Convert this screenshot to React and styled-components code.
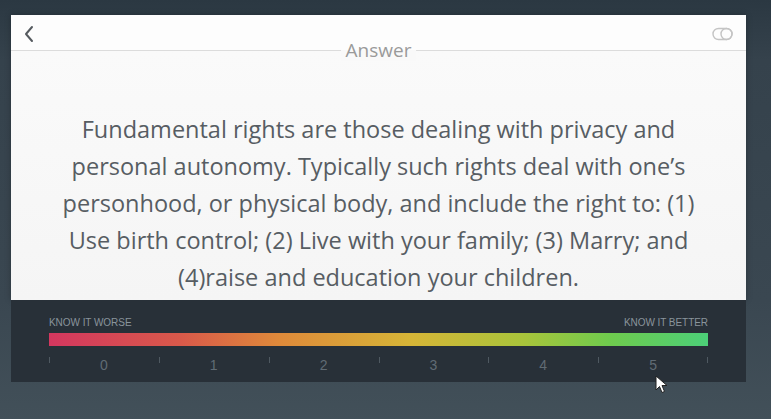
import React from "react";
import styled, { createGlobalStyle } from "styled-components";

const Global = createGlobalStyle`
  html, body { margin: 0; padding: 0; }
  body {
    width: 771px;
    height: 419px;
    overflow: hidden;
    background: linear-gradient(180deg, #2b3842 0px, #35424c 60px, #3a4751 300px, #425059 419px);
    font-family: "Open Sans", "Noto Sans", sans-serif;
  }
`;

const Page = styled.div`
  position: relative;
  padding: 15px 0 0 11px;
  width: 735px;
`;

const Card = styled.div`
  background: #f7f7f7;
  height: 285px;
  display: flex;
  flex-direction: column;
  box-shadow: 0 0 6px rgba(0,0,0,0.25);
`;

const Header = styled.div`
  height: 35px;
  background: #fdfdfd;
  border-bottom: 1px solid #dcdcdc;
  position: relative;
  display: flex;
  align-items: center;
  justify-content: space-between;
  padding: 0 12px 0 12px;
`;

const IconButton = styled.div`
  display: flex;
  align-items: center;
  height: 100%;
  padding-top: 2px;
`;

const Title = styled.div`
  position: absolute;
  left: 50%;
  bottom: -11px;
  transform: translateX(-50%);
  background: linear-gradient(180deg, #fdfdfd 50%, #f9f9f9 50%);
  padding: 0 5px;
  font-size: 19px;
  color: #9a9a9a;
  line-height: 22px;
`;

const Body = styled.div`
  flex: 1;
  display: flex;
  justify-content: center;
  padding-top: 60px;
  background: linear-gradient(180deg, #fafafa 0%, #f5f5f5 100%);
  overflow: hidden;
`;

const AnswerText = styled.p`
  margin: 0;
  width: 640px;
  text-align: center;
  font-size: 23.5px;
  line-height: 37px;
  color: #575d63;
`;

const Panel = styled.div`
  background: #283038;
  height: 82px;
  padding: 17px 38px 0 38px;
  box-sizing: border-box;
  display: flex;
  flex-direction: column;
`;

const Labels = styled.div`
  display: flex;
  justify-content: space-between;
  font-family: "Liberation Sans", Arial, sans-serif;
  font-size: 10px;
  letter-spacing: -0.05px;
  color: #8a949c;
  text-transform: uppercase;
  height: 11px;
  line-height: 11px;
`;

const Bar = styled.div`
  margin-top: 5px;
  height: 13px;
  background: linear-gradient(90deg, #d4375f 0%, #d9594a 20%, #df8a3a 35%, #d6b537 55%, #a9c43b 72%, #6fcb4d 85%, #4ccf78 100%);
`;

const Scale = styled.div`
  display: grid;
  grid-template-columns: repeat(6, 1fr);
  margin-top: 8px;
  height: 22px;
  position: relative;
`;

const Cell = styled.div`
  position: relative;
  display: flex;
  justify-content: center;
  font-family: "Liberation Sans", Arial, sans-serif;
  font-size: 14px;
  color: #606b74;
  line-height: 16px;
  padding-top: 3px;
  &::before {
    content: "";
    position: absolute;
    left: 0;
    top: 3px;
    width: 1px;
    height: 6px;
    background: #4f5961;
  }
  ${p => p.$last && `
    &::after {
      content: "";
      position: absolute;
      right: 0;
      top: 3px;
      width: 1px;
      height: 6px;
      background: #4f5961;
    }
  `}
`;

const Cursor = styled.svg`
  position: absolute;
  left: 655px;
  top: 375px;
`;

export default function App() {
  return (
    <>
      <Global />
      <Page>
        <Card>
          <Header>
            <IconButton>
              <svg width="12" height="18" viewBox="0 0 12 18">
                <path d="M9 2 L3 9 L9 16" fill="none" stroke="#555a5f" strokeWidth="2" strokeLinecap="round" strokeLinejoin="round" />
              </svg>
            </IconButton>
            <Title>Answer</Title>
            <IconButton>
              <svg width="22" height="14" viewBox="0 0 22 14">
                <rect x="1" y="1.5" width="19" height="11" rx="5.5" fill="none" stroke="#c4c4c4" strokeWidth="1.4" />
                <circle cx="14.5" cy="7" r="5.5" fill="none" stroke="#c4c4c4" strokeWidth="1.4" />
              </svg>
            </IconButton>
          </Header>
          <Body>
            <AnswerText>
              Fundamental rights are those dealing with privacy and personal autonomy. Typically such rights deal with one’s personhood, or physical body, and include the right to: (1) Use birth control; (2) Live with your family; (3) Marry; and (4)raise and education your children.
            </AnswerText>
          </Body>
        </Card>
        <Panel>
          <Labels>
            <span>Know it worse</span>
            <span>Know it better</span>
          </Labels>
          <Bar />
          <Scale>
            {[0, 1, 2, 3, 4, 5].map(n => (
              <Cell key={n} $last={n === 5}>{n}</Cell>
            ))}
          </Scale>
        </Panel>
        <Cursor width="14" height="20" viewBox="0 0 14 20">
          <path d="M1 1 L1 15 L4.5 11.5 L7 17.5 L9.5 16.5 L7 10.5 L12 10.5 Z" fill="#fff" stroke="#222" strokeWidth="1" strokeLinejoin="round" />
        </Cursor>
      </Page>
    </>
  );
}
